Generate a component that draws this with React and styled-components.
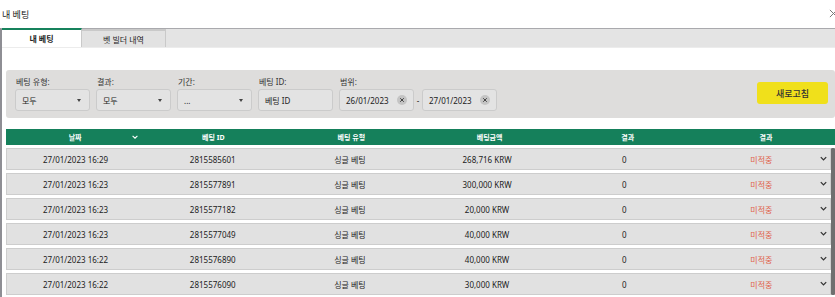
import React from "react";
import styled, { createGlobalStyle } from "styled-components";

const GlobalStyle = createGlobalStyle`
  html, body {
    margin: 0;
    padding: 0;
    background: #ffffff;
    overflow: hidden;
  }
  body {
    font-family: "Noto Sans", "Noto Sans CJK KR", sans-serif;
    color: #222;
  }
`;

const Page = styled.div`
  width: 835px;
  height: 297px;
  display: flex;
  flex-direction: column;
  overflow: hidden;
`;

const TitleBar = styled.div`
  height: 28px;
  display: flex;
  align-items: center;
  justify-content: space-between;
  padding-left: 2px;
  font-size: 9px;
  color: #222;
`;

const CloseIcon = styled.svg`
  width: 9px;
  height: 9px;
  margin-right: -3px;
  margin-top: -1px;
`;

const Frame = styled.div`
  flex: 1;
  display: flex;
  flex-direction: column;
  border-top: 1px solid #a9a9ad;
  border-left: 2px solid #8e8e94;
`;

const TabBar = styled.div`
  height: 18px;
  display: flex;
  background: #e4e4e4;
  border-bottom: 1px solid #ececec;
`;

const Tab = styled.div`
  width: ${(p) => (p.$active ? "80px" : "84px")};
  display: flex;
  align-items: center;
  justify-content: center;
  font-size: 8px;
  font-weight: ${(p) => (p.$active ? 700 : 400)};
  background: ${(p) => (p.$active ? "#ffffff" : "#e2e2e2")};
  border-top: 2px solid ${(p) => (p.$active ? "#17825c" : "#c9c9c9")};
  border-right: 1px solid #c9c9c9;
  box-sizing: border-box;
  margin-top: ${(p) => (p.$active ? "-1px" : "0")};
`;

const Content = styled.div`
  padding: 22px 0 0 4px;
  display: flex;
  flex-direction: column;
`;

const FilterPanel = styled.div`
  height: 48px;
  background: #dedddc;
  border-radius: 3px;
  display: flex;
  align-items: flex-start;
  padding: 5px 7px 0 9px;
  box-sizing: border-box;
`;

const Field = styled.div`
  display: flex;
  flex-direction: column;
  margin-right: 6px;
`;

const Label = styled.div`
  font-size: 8px;
  height: 13px;
  line-height: 13px;
  padding-left: 1px;
  color: #333;
`;

const Inputs = styled.div`
  display: flex;
  align-items: center;
  margin-top: 1px;
`;

const Box = styled.div`
  width: 75px;
  height: 22px;
  box-sizing: border-box;
  border: 1px solid #cbcbcb;
  border-radius: 3px;
  background: #e3e3e3;
  display: flex;
  align-items: center;
  justify-content: space-between;
  padding: 0 6px 0 6px;
  font-size: 8px;
  color: #222;
`;

const Caret = styled.svg`
  width: 4px;
  height: 3px;
  margin-right: 2px;
`;

const Dash = styled.span`
  font-size: 8px;
  width: 8px;
  text-align: center;
`;

const ClearIcon = styled.svg`
  width: 10px;
  height: 10px;
`;

const Refresh = styled.button`
  margin-left: auto;
  margin-top: 7px;
  width: 71px;
  height: 22px;
  border: none;
  border-radius: 3px;
  background: #f0e01b;
  font-family: inherit;
  font-size: 9px;
  color: #333;
  font-weight: 500;
`;

const Table = styled.div`
  margin-top: 11px;
  display: flex;
  flex-direction: column;
`;

const HeaderRow = styled.div`
  height: 16px;
  background: #15805b;
  display: grid;
  grid-template-columns: repeat(6, 1fr);
  align-items: center;
  color: #ffffff;
  font-size: 7px;
  font-weight: 700;
`;

const HeaderCell = styled.div`
  text-align: center;
  position: relative;
`;

const SortIcon = styled.svg`
  position: absolute;
  right: 5px;
  top: 50%;
  width: 8px;
  height: 8px;
  margin-top: -4px;
`;

const Body = styled.div`
  display: flex;
  margin-top: 3px;
`;

const Rows = styled.div`
  flex: 1;
  display: flex;
  flex-direction: column;
  gap: 3px;
`;

const Scroll = styled.div`
  width: 4px;
  background: #6f6f6f;
  border-radius: 1px;
`;

const Row = styled.div`
  height: 22px;
  box-sizing: border-box;
  background: #e1e1e1;
  border: 1px solid #cdcdcd;
  display: grid;
  grid-template-columns: repeat(6, 1fr);
  align-items: center;
  font-size: 8px;
  position: relative;
`;

const Cell = styled.div`
  text-align: center;
  color: ${(p) => (p.$miss ? "#e0634c" : "#222")};
`;

const Expand = styled.svg`
  position: absolute;
  right: 2px;
  top: 50%;
  width: 9px;
  height: 9px;
  margin-top: -5px;
`;

const bets = [
  ["27/01/2023 16:29", "2815585601", "268,716 KRW"],
  ["27/01/2023 16:23", "2815577891", "300,000 KRW"],
  ["27/01/2023 16:23", "2815577182", "20,000 KRW"],
  ["27/01/2023 16:23", "2815577049", "40,000 KRW"],
  ["27/01/2023 16:22", "2815576890", "40,000 KRW"],
  ["27/01/2023 16:22", "2815576090", "30,000 KRW"],
];

const Chevron = ({ as: Comp, color }) => (
  <Comp viewBox="0 0 10 10">
    <path d="M2 3.5 L5 6.5 L8 3.5" fill="none" stroke={color} strokeWidth="1.4" />
  </Comp>
);

const Clear = () => (
  <ClearIcon viewBox="0 0 10 10">
    <circle cx="5" cy="5" r="5" fill="#c4c4c4" />
    <path d="M3.2 3.2 L6.8 6.8 M6.8 3.2 L3.2 6.8" stroke="#444" strokeWidth="1" />
  </ClearIcon>
);

const Select = ({ value }) => (
  <Box>
    {value}
    <Caret viewBox="0 0 4 3">
      <path d="M0 0 H4 L2 3 Z" fill="#444" />
    </Caret>
  </Box>
);

export default function App() {
  return (
    <Page>
      <GlobalStyle />
      <TitleBar>
        <span>내 베팅</span>
        <CloseIcon viewBox="0 0 10 10">
          <path d="M1 1 L9 9 M9 1 L1 9" stroke="#777" strokeWidth="1.1" />
        </CloseIcon>
      </TitleBar>
      <Frame>
        <TabBar>
          <Tab $active>내 베팅</Tab>
          <Tab>벳 빌더 내역</Tab>
        </TabBar>
        <Content>
          <FilterPanel>
            <Field>
              <Label>베팅 유형:</Label>
              <Inputs>
                <Select value="모두" />
              </Inputs>
            </Field>
            <Field>
              <Label>결과:</Label>
              <Inputs>
                <Select value="모두" />
              </Inputs>
            </Field>
            <Field>
              <Label>기간:</Label>
              <Inputs>
                <Select value="..." />
              </Inputs>
            </Field>
            <Field>
              <Label>베팅 ID:</Label>
              <Inputs>
                <Box>베팅 ID</Box>
              </Inputs>
            </Field>
            <Field>
              <Label>범위:</Label>
              <Inputs>
                <Box>
                  26/01/2023
                  <Clear />
                </Box>
                <Dash>-</Dash>
                <Box>
                  27/01/2023
                  <Clear />
                </Box>
              </Inputs>
            </Field>
            <Refresh>새로고침</Refresh>
          </FilterPanel>
          <Table>
            <HeaderRow>
              <HeaderCell>
                날짜
                <Chevron as={SortIcon} color="#ffffff" />
              </HeaderCell>
              <HeaderCell>베팅 ID</HeaderCell>
              <HeaderCell>베팅 유형</HeaderCell>
              <HeaderCell>베팅금액</HeaderCell>
              <HeaderCell>결과</HeaderCell>
              <HeaderCell>결과</HeaderCell>
            </HeaderRow>
            <Body>
              <Rows>
                {bets.map(([date, id, amount]) => (
                  <Row key={id}>
                    <Cell>{date}</Cell>
                    <Cell>{id}</Cell>
                    <Cell>싱글 베팅</Cell>
                    <Cell>{amount}</Cell>
                    <Cell>0</Cell>
                    <Cell $miss>미적중</Cell>
                    <Chevron as={Expand} color="#333" />
                  </Row>
                ))}
              </Rows>
              <Scroll />
            </Body>
          </Table>
        </Content>
      </Frame>
    </Page>
  );
}
